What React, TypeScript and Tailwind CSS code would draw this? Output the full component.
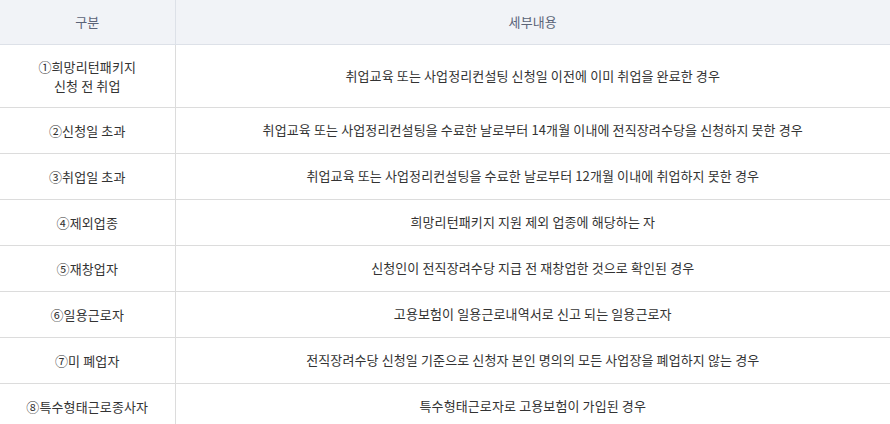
const rows: { label: React.ReactNode; desc: string }[] = [
  {
    label: (
      <>
        ①희망리턴패키지
        <br />
        신청 전 취업
      </>
    ),
    desc: "취업교육 또는 사업정리컨설팅 신청일 이전에 이미 취업을 완료한 경우",
  },
  { label: "②신청일 초과", desc: "취업교육 또는 사업정리컨설팅을 수료한 날로부터 14개월 이내에 전직장려수당을 신청하지 못한 경우" },
  { label: "③취업일 초과", desc: "취업교육 또는 사업정리컨설팅을 수료한 날로부터 12개월 이내에 취업하지 못한 경우" },
  { label: "④제외업종", desc: "희망리턴패키지 지원 제외 업종에 해당하는 자" },
  { label: "⑤재창업자", desc: "신청인이 전직장려수당 지급 전 재창업한 것으로 확인된 경우" },
  { label: "⑥일용근로자", desc: "고용보험이 일용근로내역서로 신고 되는 일용근로자" },
  { label: "⑦미 폐업자", desc: "전직장려수당 신청일 기준으로 신청자 본인 명의의 모든 사업장을 폐업하지 않는 경우" },
  { label: "⑧특수형태근로종사자", desc: "특수형태근로자로 고용보험이 가입된 경우" },
];

export default function App() {
  return (
    <div
      className="w-[890px] h-[424px] overflow-hidden bg-white text-[13px] tracking-[0.12px] text-[#333]"
      style={{ fontFamily: '"Noto Sans CJK KR", "Noto Sans", sans-serif' }}
    >
      <table className="w-full border-collapse table-fixed">
        <colgroup>
          <col className="w-[175px]" />
          <col />
        </colgroup>
        <thead>
          <tr className="h-[44px] bg-[#f1f3f7] text-[#5b6478]">
            <th className="font-normal border-r border-b border-[#dde1e8] text-center">구분</th>
            <th className="font-normal border-b border-[#dde1e8] text-center">세부내용</th>
          </tr>
        </thead>
        <tbody>
          {rows.map((r, i) => (
            <tr key={i} className={i === 0 ? "h-[63px]" : "h-[46px]"}>
              <td className="border-r border-b border-[#dcdcdc] text-center leading-[19px]">{r.label}</td>
              <td className="border-b border-[#dcdcdc] text-center">{r.desc}</td>
            </tr>
          ))}
        </tbody>
      </table>
    </div>
  );
}
